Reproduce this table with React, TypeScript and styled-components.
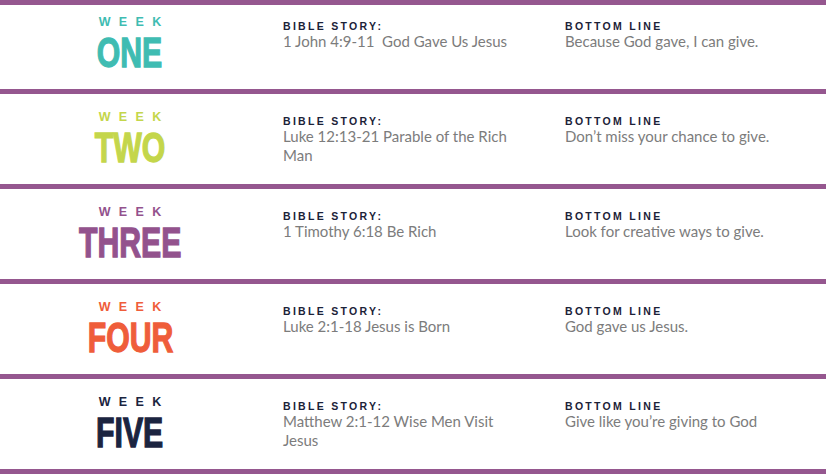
import React from 'react';
import styled, { createGlobalStyle } from 'styled-components';

interface Week {
  label: string;
  color: string;
  story: string;
  line: string;
}

const weeks: Week[] = [
  { label: 'ONE', color: '#3fbcb2', story: '1 John 4:9-11  God Gave Us Jesus', line: 'Because God gave, I can give.' },
  { label: 'TWO', color: '#c4d64b', story: 'Luke 12:13-21 Parable of the Rich Man', line: 'Don’t miss your chance to give.' },
  { label: 'THREE', color: '#93528d', story: '1 Timothy 6:18 Be Rich', line: 'Look for creative ways to give.' },
  { label: 'FOUR', color: '#ef5d3a', story: 'Luke 2:1-18 Jesus is Born', line: 'God gave us Jesus.' },
  { label: 'FIVE', color: '#1b2440', story: 'Matthew 2:1-12 Wise Men Visit Jesus', line: 'Give like you’re giving to God' },
];

const GlobalStyle = createGlobalStyle`
  html, body {
    margin: 0;
    padding: 0;
    background: #ffffff;
  }
  body {
    font-family: 'Lato', 'Liberation Sans', sans-serif;
  }
`;

const Schedule = styled.div`
  width: 826px;
  border-top: 5px solid #95578f;
`;

// each row carries the bar under it; the first one is cropped at the top
const Row = styled.div`
  display: grid;
  grid-template-columns: 260px 259px 1fr;
  column-gap: 23px;
  box-sizing: border-box;
  height: 95px;
  border-bottom: 5px solid #95578f;

  &:first-child {
    height: 89px;
  }
`;

const WeekCell = styled.div<{ $shift: number }>`
  display: flex;
  flex-direction: column;
  align-items: center;
  padding-top: ${(p) => 17 - p.$shift}px;
`;

const WeekTag = styled.div<{ $color: string }>`
  font-family: 'Liberation Sans', Arial, sans-serif;
  font-weight: 700;
  font-size: 12.5px;
  line-height: 13px;
  letter-spacing: 8.4px;
  padding-left: 8.4px;
  color: ${(p) => p.$color};
`;

const WeekNumber = styled.div<{ $color: string }>`
  margin-top: 6px;
  font-family: 'Liberation Sans', Arial, sans-serif;
  font-weight: 700;
  font-size: 42px;
  line-height: 36px;
  color: ${(p) => p.$color};
  -webkit-text-stroke: 1.3px ${(p) => p.$color};
  transform: scaleX(0.72);
`;

const InfoCell = styled.div<{ $shift: number }>`
  padding-top: ${(p) => 21 - p.$shift}px;
`;

const Label = styled.div`
  font-family: 'Liberation Sans', Arial, sans-serif;
  font-weight: 700;
  font-size: 10.5px;
  line-height: 12px;
  letter-spacing: 2.3px;
  color: #1b2238;
`;

const Body = styled.div`
  max-width: 242px;
  font-family: 'Lato', sans-serif;
  font-size: 15px;
  line-height: 19px;
  color: #7c7c7c;
  white-space: pre-wrap;
`;

export default function App() {
  return (
    <>
      <GlobalStyle />
      <Schedule>
        {weeks.map((w, i) => {
          const shift = i === 0 ? 6 : 0;
          return (
            <Row key={w.label}>
              <WeekCell $shift={shift}>
                <WeekTag $color={w.color}>WEEK</WeekTag>
                <WeekNumber $color={w.color}>{w.label}</WeekNumber>
              </WeekCell>
              <InfoCell $shift={shift}>
                <Label>BIBLE STORY:</Label>
                <Body>{w.story}</Body>
              </InfoCell>
              <InfoCell $shift={shift}>
                <Label>BOTTOM LINE</Label>
                <Body>{w.line}</Body>
              </InfoCell>
            </Row>
          );
        })}
      </Schedule>
    </>
  );
}
